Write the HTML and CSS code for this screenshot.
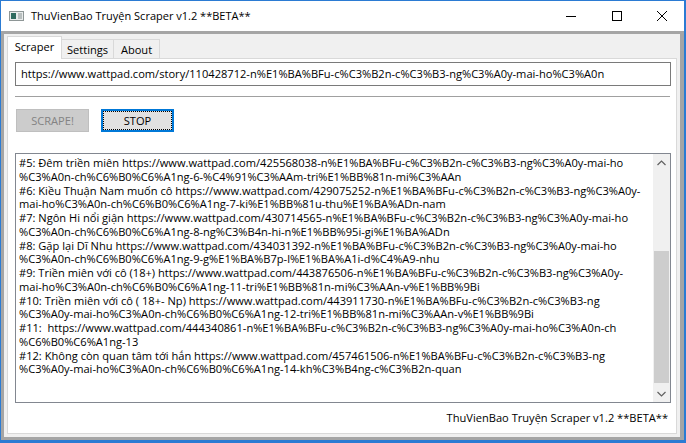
FILE: index.html
```html
<!DOCTYPE html>
<html lang="vi">
<head>
<meta charset="utf-8">
<title>ThuVienBao Truyện Scraper v1.2 **BETA**</title>
<link rel="stylesheet" href="styles.css">
</head>
<body>
<div class="window">
  <div class="titlebar">
    <svg class="app-icon" width="15" height="10" viewBox="0 0 15 10">
      <rect x="0" y="0" width="15" height="10" fill="#8e9696"/>
      <rect x="1" y="1" width="13" height="8" fill="#e9ecec"/>
      <rect x="2" y="2" width="5" height="6" fill="#2f6b5f"/>
      <rect x="9" y="2" width="4" height="6" fill="#b9bfbf"/>
    </svg>
    <span class="title">ThuVienBao Truyện Scraper v1.2 **BETA**</span>
    <div class="controls">
      <div class="ctl ctl-min"><svg width="10" height="10" viewBox="0 0 10 10"><line x1="0" y1="5.5" x2="10" y2="5.5" stroke="#000" stroke-width="1"/></svg></div>
      <div class="ctl ctl-max"><svg width="10" height="10" viewBox="0 0 10 10"><rect x="0.5" y="0.5" width="9" height="9" fill="none" stroke="#000" stroke-width="1"/></svg></div>
      <div class="ctl ctl-close"><svg width="10" height="10" viewBox="0 0 10 10"><path d="M0 0 L10 10 M10 0 L0 10" stroke="#000" stroke-width="1"/></svg></div>
    </div>
  </div>
  <div class="client">
    <div class="tabs">
      <div class="tab tab-active tab-scraper">Scraper</div>
      <div class="tab tab-settings">Settings</div>
      <div class="tab tab-about">About</div>
    </div>
    <div class="page">
      <div class="urlbox">https://www.wattpad.com/story/110428712-n%E1%BA%BFu-c%C3%B2n-c%C3%B3-ng%C3%A0y-mai-ho%C3%A0n</div>
      <div class="sep"></div>
      <div class="buttons">
        <div class="btn btn-disabled">SCRAPE!</div>
        <div class="btn btn-default"><div class="focus">STOP</div></div>
      </div>
      <div class="log">
        <div class="log-text">
          <div class="ln">#5: Đêm triền miên https://www.wattpad.com/425568038-n%E1%BA%BFu-c%C3%B2n-c%C3%B3-ng%C3%A0y-mai-ho</div>
          <div class="ln">%C3%A0n-ch%C6%B0%C6%A1ng-6-%C4%91%C3%AAm-tri%E1%BB%81n-mi%C3%AAn</div>
          <div class="ln">#6: Kiều Thuận Nam muốn cô https://www.wattpad.com/429075252-n%E1%BA%BFu-c%C3%B2n-c%C3%B3-ng%C3%A0y-</div>
          <div class="ln">mai-ho%C3%A0n-ch%C6%B0%C6%A1ng-7-ki%E1%BB%81u-thu%E1%BA%ADn-nam</div>
          <div class="ln">#7: Ngôn Hi nổi giận https://www.wattpad.com/430714565-n%E1%BA%BFu-c%C3%B2n-c%C3%B3-ng%C3%A0y-mai-ho</div>
          <div class="ln">%C3%A0n-ch%C6%B0%C6%A1ng-8-ng%C3%B4n-hi-n%E1%BB%95i-gi%E1%BA%ADn</div>
          <div class="ln">#8: Gặp lại Dĩ Nhu https://www.wattpad.com/434031392-n%E1%BA%BFu-c%C3%B2n-c%C3%B3-ng%C3%A0y-mai-ho</div>
          <div class="ln">%C3%A0n-ch%C6%B0%C6%A1ng-9-g%E1%BA%B7p-l%E1%BA%A1i-d%C4%A9-nhu</div>
          <div class="ln">#9: Triền miên với cô (18+) https://www.wattpad.com/443876506-n%E1%BA%BFu-c%C3%B2n-c%C3%B3-ng%C3%A0y-</div>
          <div class="ln">mai-ho%C3%A0n-ch%C6%B0%C6%A1ng-11-tri%E1%BB%81n-mi%C3%AAn-v%E1%BB%9Bi</div>
          <div class="ln">#10: Triền miên với cô ( 18+- Np) https://www.wattpad.com/443911730-n%E1%BA%BFu-c%C3%B2n-c%C3%B3-ng</div>
          <div class="ln">%C3%A0y-mai-ho%C3%A0n-ch%C6%B0%C6%A1ng-12-tri%E1%BB%81n-mi%C3%AAn-v%E1%BB%9Bi</div>
          <div class="ln">#11:  https://www.wattpad.com/444340861-n%E1%BA%BFu-c%C3%B2n-c%C3%B3-ng%C3%A0y-mai-ho%C3%A0n-ch</div>
          <div class="ln">%C6%B0%C6%A1ng-13</div>
          <div class="ln">#12: Không còn quan tâm tới hắn https://www.wattpad.com/457461506-n%E1%BA%BFu-c%C3%B2n-c%C3%B3-ng</div>
          <div class="ln">%C3%A0y-mai-ho%C3%A0n-ch%C6%B0%C6%A1ng-14-kh%C3%B4ng-c%C3%B2n-quan</div>
        </div>
        <div class="scrollbar">
          <div class="sb-arrow"><svg width="9" height="6" viewBox="0 0 9 6"><polyline points="0.5,5 4.5,1 8.5,5" fill="none" stroke="#606060" stroke-width="1.2"/></svg></div>
          <div class="sb-track"><div class="sb-thumb"></div></div>
          <div class="sb-arrow"><svg width="9" height="6" viewBox="0 0 9 6"><polyline points="0.5,1 4.5,5 8.5,1" fill="none" stroke="#606060" stroke-width="1.2"/></svg></div>
        </div>
      </div>
      <div class="status">ThuVienBao Truyện Scraper v1.2 **BETA**</div>
    </div>
  </div>
</div>
</body>
</html>
```
FILE: styles.css
```css
* { box-sizing: border-box; }
html, body { margin: 0; padding: 0; }
body {
  width: 686px;
  height: 443px;
  overflow: hidden;
  background: #fff;
  font-family: "Open Sans", "Noto Sans", sans-serif;
  font-size: 11.1px;
  color: #000;
}
.window {
  width: 686px;
  height: 443px;
  display: flex;
  flex-direction: column;
  border-style: solid;
  border-color: #2b7bd3;
  border-width: 1px 2px 3px 1px;
  background: #fff;
}
.titlebar {
  height: 30px;
  flex: none;
  display: flex;
  align-items: center;
  background: #fff;
}
.app-icon { margin-left: 8px; flex: none; }
.title {
  margin-left: 7px;
  font-size: 11px;
  line-height: 30px;
  white-space: nowrap;
}
.controls {
  margin-left: auto;
  display: flex;
  height: 30px;
}
.ctl {
  width: 46px;
  height: 30px;
  display: flex;
  align-items: center;
  justify-content: center;
}
.ctl svg { display: block; }
.ctl-close { width: 44px; }
.client {
  flex: 1;
  display: flex;
  flex-direction: column;
  background: #f0f0f0;
  border-style: solid;
  border-color: #a5a5a5;
  border-width: 3px 4px 3px 3px;
}
.tabs {
  height: 24px;
  flex: none;
  display: flex;
  align-items: flex-end;
  padding-left: 3px;
}
.tab {
  height: 19px;
  border: 1px solid #d9d9d9;
  border-bottom: none;
  background: #f0f0f0;
  display: flex;
  align-items: center;
  justify-content: center;
  line-height: 15px;
  white-space: nowrap;
  margin-left: -1px;
}
.tab-active {
  height: 23px;
  margin-bottom: -1px;
  margin-left: 0;
  background: #fff;
  position: relative;
  z-index: 1;
  padding-bottom: 3px;
}
.tab-scraper { width: 55px; }
.tab-settings { width: 53px; }
.tab-about { width: 47px; }
.page {
  flex: 1;
  margin: 0 3px 3px 3px;
  border: 1px solid #d9d9d9;
  background: #fff;
  display: flex;
  flex-direction: column;
}
.urlbox {
  margin: 3px 0 0 7px;
  width: 656px;
  height: 24px;
  border: 1px solid #7a7a7a;
  padding-left: 5px;
  line-height: 21px;
  white-space: nowrap;
  overflow: hidden;
}
.sep {
  margin: 10px 0 0 7px;
  width: 655px;
  height: 1px;
  background: #a0a0a0;
}
.buttons {
  margin: 12px 0 0 8px;
  display: flex;
  gap: 12px;
}
.btn {
  width: 73px;
  height: 23px;
  display: flex;
  align-items: center;
  justify-content: center;
  line-height: 15px;
}
.btn-disabled {
  background: #cccccc;
  border: 1px solid #bfbfbf;
  color: #838383;
}
.btn-default {
  background: #e1e1e1;
  border: 2px solid #0078d7;
}
.focus {
  width: 100%;
  height: 100%;
  border: 1px dotted #000;
  display: flex;
  align-items: center;
  justify-content: center;
}
.log {
  margin: 21px 0 0 7px;
  width: 656px;
  height: 250px;
  border: 1px solid #828790;
  display: flex;
}
.log-text {
  flex: 1;
  overflow: hidden;
  padding: 2px 0 0 3px;
  line-height: 13.75px;
}
.ln { white-space: pre; }
.scrollbar {
  width: 17px;
  flex: none;
  background: #f0f0f0;
  display: flex;
  flex-direction: column;
}
.sb-arrow {
  height: 17px;
  flex: none;
  display: flex;
  align-items: center;
  justify-content: center;
}
.sb-arrow svg { display: block; }
.sb-track { flex: 1; }
.sb-thumb {
  margin: 80px 1px 0 1px;
  height: 132px;
  background: #cdcdcd;
}
.status {
  margin-top: 7px;
  padding-right: 8px;
  text-align: right;
  line-height: 15px;
  white-space: nowrap;
}
```
